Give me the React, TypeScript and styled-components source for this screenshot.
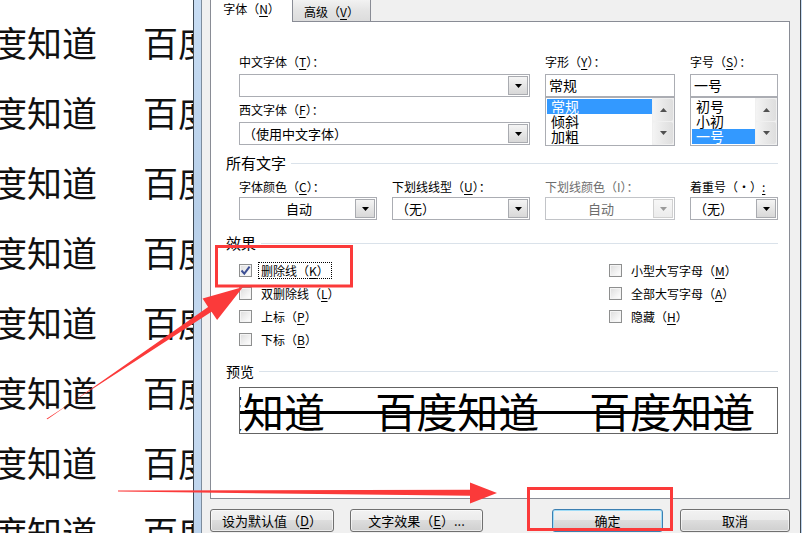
import styled, { createGlobalStyle } from 'styled-components';

const CJK = `"Noto Sans CJK SC", "Noto Sans CJK JP", "Liberation Sans", sans-serif`;
const RED = '#fb3a3a';

const GlobalStyle = createGlobalStyle`
  html, body {
    margin: 0;
    padding: 0;
    width: 802px;
    height: 533px;
    overflow: hidden;
    background: #fff;
  }
  body {
    font-family: ${CJK};
  }
  * {
    box-sizing: border-box;
  }
`;

const leftEffects = [
  { text: '删除线', key: 'K', checked: true, focused: true },
  { text: '双删除线', key: 'L' },
  { text: '上标', key: 'P' },
  { text: '下标', key: 'B' },
];

const rightEffects = [
  { text: '小型大写字母', key: 'M' },
  { text: '全部大写字母', key: 'A' },
  { text: '隐藏', key: 'H' },
];

const ArrowDown = ({ color = '#000' }: { color?: string }) => (
  <svg width="7" height="4" viewBox="0 0 7 4">
    <polygon points="0,0 7,0 3.5,4" fill={color} />
  </svg>
);

const ArrowUp = ({ color = '#000' }: { color?: string }) => (
  <svg width="7" height="4" viewBox="0 0 7 4">
    <polygon points="0,4 7,4 3.5,0" fill={color} />
  </svg>
);

const DropDown = ({ value, center, disabled }: { value: string; center?: boolean; disabled?: boolean }) => (
  <Combo $disabled={disabled}>
    <ComboText $center={center}>{value}</ComboText>
    <DropButton $disabled={disabled}>
      <ArrowDown color={disabled ? '#9a9a9a' : '#000'} />
    </DropButton>
  </Combo>
);

const List = ({ items, selected }: { items: string[]; selected: number }) => (
  <ListBox>
    <ListItems>
      {items.map((item, i) => (
        <ListItem key={item} $selected={i === selected}>{item}</ListItem>
      ))}
    </ListItems>
    <ScrollBar>
      <ScrollButton><ArrowUp color="#505050" /></ScrollButton>
      <ScrollButton><ArrowDown color="#505050" /></ScrollButton>
    </ScrollBar>
  </ListBox>
);

const Effect = ({ text, k, checked, focused }: { text: string; k: string; checked?: boolean; focused?: boolean }) => (
  <CheckRow>
    <CheckBox>
      {checked && (
        <svg width="11" height="11" viewBox="0 0 11 11">
          <path d="M1.5 5.5 L4.3 8.6 L9.6 1.6" fill="none" stroke="#3d4f94" strokeWidth="2" />
        </svg>
      )}
    </CheckBox>
    <CheckLabel $focused={focused}>
      {text}（<Key>{k}</Key>）
    </CheckLabel>
  </CheckRow>
);

const Annotations = () => (
  <Overlay width="802" height="533" viewBox="0 0 802 533">
    <rect x="216.5" y="246.5" width="135" height="39.5" fill="none" stroke={RED} strokeWidth="3" />
    <rect x="528.5" y="488.5" width="143" height="41" fill="none" stroke={RED} strokeWidth="3" />
    <polygon
      points="46.5,418.7 211.5,311.8 217.1,320.1 243,287 202.6,298.6 208.1,306.9 47.5,419.3"
      fill={RED}
    />
    <polygon points="118,490.5 470,489.8 470,482.5 497,493 470,503.5 470,495.8 118,491.5" fill={RED} />
  </Overlay>
);

const App = () => {
  const docLines = Array.from({ length: 8 }, (_, i) => i);

  return (
    <>
      <GlobalStyle />
      <Page>
        <Doc>
          {docLines.map((i) => (
            <DocLine key={i}>
              <span>百度知道</span>
              <span>百度知道</span>
            </DocLine>
          ))}
        </Doc>

        <Dialog>
          <FrameEdge $side="left" />
          <Face>
            <TabRow>
              <Tab $active $w={83}>字体（<Key>N</Key>）</Tab>
              <Tab $w={78}>高级（<Key>V</Key>）</Tab>
            </TabRow>

            <Panel>
              <FontGrid>
                <Column>
                  <Label>中文字体（<Key>T</Key>）：</Label>
                  <Spaced $top={4}><DropDown value="" /></Spaced>
                  <Spaced $top={5}><Label>西文字体（<Key>F</Key>）：</Label></Spaced>
                  <Spaced $top={4}><DropDown value="（使用中文字体）" /></Spaced>
                </Column>
                <Column>
                  <Label>字形（<Key>Y</Key>）：</Label>
                  <Spaced $top={4}><TextBox>常规</TextBox></Spaced>
                  <List items={['常规', '倾斜', '加粗']} selected={0} />
                </Column>
                <Column>
                  <Label>字号（<Key>S</Key>）：</Label>
                  <Spaced $top={4}><TextBox>一号</TextBox></Spaced>
                  <List items={['初号', '小初', '一号']} selected={2} />
                </Column>
              </FontGrid>

              <GroupHeader $top={9}>所有文字</GroupHeader>
              <StyleGrid>
                <Column>
                  <Label>字体颜色（<Key>C</Key>）：</Label>
                  <Spaced $top={2}><DropDown value="自动" center /></Spaced>
                </Column>
                <Column>
                  <Label>下划线线型（<Key>U</Key>）：</Label>
                  <Spaced $top={2}><DropDown value="（无）" /></Spaced>
                </Column>
                <Column>
                  <Label $disabled>下划线颜色（I）：</Label>
                  <Spaced $top={2}><DropDown value="自动" center disabled /></Spaced>
                </Column>
                <Column>
                  <Label>着重号（·）<Key>:</Key></Label>
                  <Spaced $top={2}><DropDown value="（无）" /></Spaced>
                </Column>
              </StyleGrid>

              <GroupHeader $top={15}>效果</GroupHeader>
              <Effects>
                <EffectColumn $w={370}>
                  {leftEffects.map((e) => (
                    <Effect key={e.key} text={e.text} k={e.key} checked={e.checked} focused={e.focused} />
                  ))}
                </EffectColumn>
                <EffectColumn>
                  {rightEffects.map((e) => (
                    <Effect key={e.key} text={e.text} k={e.key} />
                  ))}
                </EffectColumn>
              </Effects>

              <GroupHeader $top={12} $small>预览</GroupHeader>
              <PreviewBox>
                <PreviewText>{'百度知道\u3000 百度知道\u3000 百度知道'}</PreviewText>
              </PreviewBox>
            </Panel>

            <ButtonRow>
              <ButtonGroup $gap={16}>
                <Button $w={124}>设为默认值（<Key>D</Key>）</Button>
                <Button $w={133}>文字效果（<Key>E</Key>）...</Button>
              </ButtonGroup>
              <ButtonGroup $gap={17}>
                <Button $w={111} $primary>确定</Button>
                <Button $w={110}>取消</Button>
              </ButtonGroup>
            </ButtonRow>
          </Face>
          <FrameEdge $side="right" />
        </Dialog>

        <Annotations />
      </Page>
    </>
  );
};

const Page = styled.div`
  position: relative;
  display: flex;
  width: 802px;
  height: 533px;
  overflow: hidden;
  background: #fff;
`;

const Doc = styled.div`
  flex: none;
  width: 193px;
  overflow: hidden;
  padding-top: 7px;
  font-family: ${CJK};
  font-size: 35px;
  color: #111;
`;

const DocLine = styled.div`
  display: flex;
  gap: 46px;
  height: 70px;
  line-height: 70px;
  margin-left: -43px;
  white-space: nowrap;
`;

const Dialog = styled.div`
  flex: 1;
  display: flex;
  height: 533px;
`;

const FrameEdge = styled.div<{ $side: 'left' | 'right' }>`
  flex: none;
  width: ${(p) => (p.$side === 'left' ? '9px' : '1px')};
  border-left: ${(p) => (p.$side === 'left' ? '1px solid #3e4a57' : 'none')};
  border-right: ${(p) => (p.$side === 'left' ? '1px solid #7d8c9c' : 'none')};
  background: linear-gradient(to bottom, #c8ddf4, #b7cfe9 40%, #c9dcf2 70%, #bcd3ec);
`;

const Face = styled.div`
  flex: 1;
  display: flex;
  flex-direction: column;
  padding: 0 10px 0 8px;
  background: #f0f0f0;
  border-right: 1px solid #3f4852;
  font-family: ${CJK};
  font-size: 12px;
  color: #000;
`;

const TabRow = styled.div`
  flex: none;
  display: flex;
  height: 21px;
`;

const Tab = styled.div<{ $active?: boolean; $w: number }>`
  position: relative;
  z-index: ${(p) => (p.$active ? 1 : 0)};
  display: flex;
  align-items: center;
  justify-content: center;
  width: ${(p) => p.$w}px;
  height: ${(p) => (p.$active ? '22px' : '21px')};
  padding-bottom: ${(p) => (p.$active ? '4px' : '0')};
  padding-top: ${(p) => (p.$active ? '0' : '2px')};
  border-left: ${(p) => (p.$active ? '1px solid #898c95' : 'none')};
  border-right: 1px solid #898c95;
  background: ${(p) => (p.$active ? '#fff' : 'linear-gradient(to bottom, #f2f2f2, #e4e4e4 50%, #dcdcdc)')};
  font-size: 12px;
  line-height: 16px;
  white-space: nowrap;
`;

const Panel = styled.div`
  flex: none;
  height: 478px;
  padding: 32px 11px 0 15px;
  background: #fff;
  border: 1px solid #898c95;
`;

const FontGrid = styled.div`
  display: grid;
  grid-template-columns: 291px 130px 88px;
  column-gap: 15px;
  margin-left: 13px;
  align-items: start;
`;

const StyleGrid = styled.div`
  display: grid;
  grid-template-columns: 138px 138px 130px 88px;
  column-gap: 15px;
  margin-top: 8px;
  margin-left: 13px;
`;

const Column = styled.div`
  display: flex;
  flex-direction: column;
`;

const Spaced = styled.div<{ $top: number }>`
  margin-top: ${(p) => p.$top}px;
`;

const Label = styled.div<{ $disabled?: boolean }>`
  height: 16px;
  font-size: 12px;
  line-height: 16px;
  white-space: nowrap;
  color: ${(p) => (p.$disabled ? '#6d6d6d' : '#000')};
`;

const Key = styled.span`
  text-decoration: underline;
  text-underline-offset: 2px;
`;

const Combo = styled.div<{ $disabled?: boolean }>`
  display: flex;
  align-items: center;
  height: 23px;
  background: #fff;
  border: 1px solid ${(p) => (p.$disabled ? '#c2c4c8' : '#abadb3')};
  color: ${(p) => (p.$disabled ? '#6d6d6d' : '#000')};
`;

const ComboText = styled.div<{ $center?: boolean }>`
  flex: 1;
  padding-left: 3px;
  font-size: 13px;
  line-height: 19px;
  text-align: ${(p) => (p.$center ? 'center' : 'left')};
  white-space: nowrap;
`;

const DropButton = styled.div<{ $disabled?: boolean }>`
  display: flex;
  align-items: center;
  justify-content: center;
  width: 20px;
  height: 19px;
  margin-right: 1px;
  border: 1px solid ${(p) => (p.$disabled ? '#d0d0d0' : '#a9abb0')};
  background: ${(p) =>
    p.$disabled
      ? 'linear-gradient(to bottom, #f7f7f7, #ececec)'
      : 'linear-gradient(to bottom, #f5f5f5, #e6e6e6 50%, #d8d8d8)'};
`;

const TextBox = styled.div`
  height: 23px;
  padding-left: 3px;
  border: 1px solid #abadb3;
  font-size: 14px;
  line-height: 21px;
`;

const ListBox = styled.div`
  display: flex;
  height: 49px;
  border: 1px solid #abadb3;
  background: #fff;
`;

const ListItems = styled.div`
  flex: 1;
  padding: 1px 0 0 1px;
`;

const ListItem = styled.div<{ $selected?: boolean }>`
  height: 15px;
  padding-left: 4px;
  font-size: 14px;
  line-height: 15px;
  background: ${(p) => (p.$selected ? '#3399ff' : 'transparent')};
  color: ${(p) => (p.$selected ? '#fff' : '#000')};
`;

const ScrollBar = styled.div`
  flex: none;
  display: flex;
  flex-direction: column;
  gap: 1px;
  width: 22px;
  padding: 1px;
  background: #f0f0f0;
`;

const ScrollButton = styled.div`
  flex: 1;
  display: flex;
  align-items: center;
  justify-content: center;
  border-radius: 2px;
  background: linear-gradient(to right, #f4f4f4, #e8e8e8 50%, #dedede);
`;

const GroupHeader = styled.div<{ $top: number; $small?: boolean }>`
  display: flex;
  align-items: center;
  gap: 5px;
  height: 16px;
  margin-top: ${(p) => p.$top}px;
  font-size: ${(p) => (p.$small ? '14px' : '15px')};
  line-height: 16px;
  white-space: nowrap;

  &::after {
    content: '';
    flex: 1;
    height: 1px;
    background: #dae2ea;
  }
`;

const Effects = styled.div`
  display: flex;
  margin-top: 8px;
  margin-left: 13px;
`;

const EffectColumn = styled.div<{ $w?: number }>`
  display: flex;
  flex-direction: column;
  width: ${(p) => (p.$w ? `${p.$w}px` : 'auto')};
`;

const CheckRow = styled.div`
  display: flex;
  align-items: center;
  gap: 6px;
  height: 23px;
`;

const CheckBox = styled.div`
  display: flex;
  align-items: center;
  justify-content: center;
  width: 13px;
  height: 13px;
  border: 1px solid #8e8f8f;
  background: linear-gradient(135deg, #dcdcdc, #f6f6f6 70%, #ffffff);
  box-shadow: inset 0 0 0 1px #f4f4f4;
`;

const CheckLabel = styled.div<{ $focused?: boolean }>`
  padding: 0 2px;
  border: 1px dotted ${(p) => (p.$focused ? '#000' : 'transparent')};
  font-size: 12px;
  line-height: 15px;
  white-space: nowrap;
`;

const PreviewBox = styled.div`
  display: flex;
  align-items: center;
  height: 47px;
  margin-top: 8px;
  margin-left: 13px;
  overflow: hidden;
  border: 1px solid #646464;
`;

const PreviewText = styled.div`
  margin-left: -79px;
  font-size: 41px;
  line-height: 45px;
  white-space: pre;
  text-decoration: line-through;
  text-decoration-thickness: 3px;
`;

const ButtonRow = styled.div`
  display: flex;
  justify-content: space-between;
  margin-top: 10px;
`;

const ButtonGroup = styled.div<{ $gap: number }>`
  display: flex;
  gap: ${(p) => p.$gap}px;
`;

const Button = styled.div<{ $w: number; $primary?: boolean }>`
  display: flex;
  align-items: center;
  justify-content: center;
  width: ${(p) => p.$w}px;
  height: 23px;
  border: 1px solid ${(p) => (p.$primary ? '#3c7fb1' : '#707070')};
  border-radius: 3px;
  background: linear-gradient(to bottom, #f2f2f2 0%, #ebebeb 50%, #dddddd 50%, #cfcfcf 100%);
  box-shadow: inset 0 0 0 1px ${(p) => (p.$primary ? '#9fdcf7' : 'rgba(255,255,255,0.6)')};
  font-size: 13px;
  line-height: 16px;
  white-space: nowrap;
`;

const Overlay = styled.svg`
  position: absolute;
  left: 0;
  top: 0;
  pointer-events: none;
`;

export default App;
